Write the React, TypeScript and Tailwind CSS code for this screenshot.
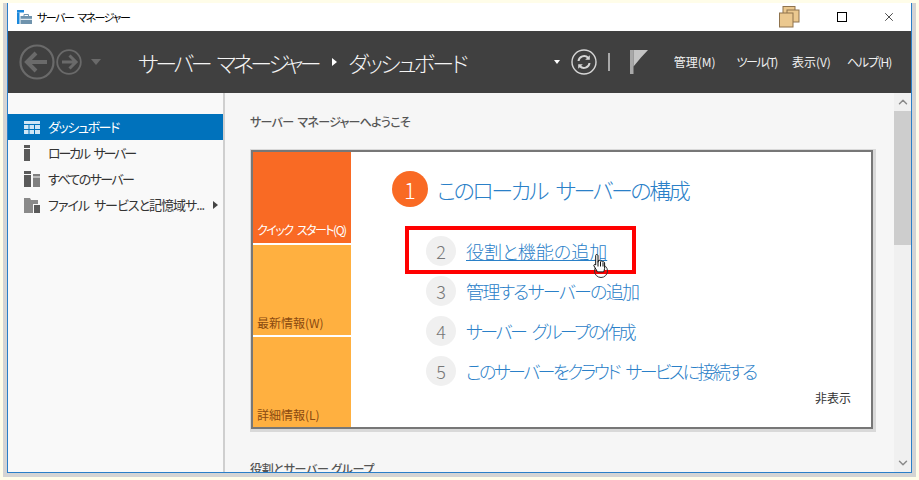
import { ChevronUp, ChevronDown, X } from "lucide-react";

const font = "font-['Noto_Sans_CJK_JP','Noto_Sans',sans-serif] [font-feature-settings:'palt']";

const BackButton = ({ size }: { size: number }) => (
  <svg width={size} height={size} viewBox="0 0 36 36" fill="none" stroke="#6a6a6a">
    <circle cx="18" cy="18" r="16.5" strokeWidth="2.2" />
    <path d="M8 18h20M17 9l-9 9 9 9" strokeWidth="4" />
  </svg>
);

const ForwardButton = () => (
  <svg width="26" height="26" viewBox="0 0 26 26" fill="none" stroke="#6a6a6a">
    <circle cx="13" cy="13" r="11.8" strokeWidth="1.8" />
    <path d="M6 13h14M13.5 6.5 20 13l-6.5 6.5" strokeWidth="3" />
  </svg>
);

const RefreshButton = () => (
  <svg width="26" height="26" viewBox="0 0 26 26" fill="none" stroke="#d6d6d6">
    <circle cx="13" cy="13" r="12" strokeWidth="1.4" />
    <path d="M7.5 12a5.6 5.6 0 0 1 9.6-3.2M18.5 14a5.6 5.6 0 0 1-9.6 3.2" strokeWidth="2" />
    <path d="M18.8 6.2v4.6h-4.6zM7.2 19.8v-4.6h4.6z" fill="#d6d6d6" stroke="none" />
  </svg>
);

const Flag = () => (
  <svg width="18" height="24" viewBox="0 0 18 24">
    <rect x="0" y="0" width="3.5" height="24" fill="#a8a8a8" />
    <path d="M3.5 0H18l-7 7.5-7.5 9z" fill="#c4c4c4" />
  </svg>
);

const AppLogo = () => (
  <svg width="15" height="14" viewBox="0 0 15 14">
    <rect x="0" y="0" width="7" height="2.5" fill="#1a88dc" />
    <rect x="0" y="2.5" width="2.5" height="11.5" fill="#1a88dc" />
    <rect x="3.5" y="6" width="11.5" height="8" fill="#6f93ad" />
    <path d="M7 6V4.5h4.5V6" fill="none" stroke="#6f93ad" />
    <rect x="3.5" y="8.8" width="11.5" height="1" fill="#fff" />
  </svg>
);

const Windows = () => (
  <svg width="21" height="22" viewBox="0 0 21 22" stroke="#8f734d" fill="#ebc88f">
    <rect x="4" y="0.5" width="12" height="12" />
    <rect x="8" y="4" width="12" height="12" />
    <rect x="0.5" y="7" width="13.5" height="14" />
  </svg>
);

const Hand = () => (
  <svg width="18" height="26" viewBox="0 0 18 26">
    <circle cx="9" cy="18" r="6.5" fill="none" stroke="#333" strokeWidth="1" />
    <path
      d="M4.5 1.5c1 0 1.5.6 1.5 1.5v6.5l.5-2c1-.4 1.8 0 2 .8.8-.6 1.8-.3 2.1.6.9-.5 2 0 2 1v5.5c0 1.500-.8 2.600-1 3.500H5.500L2 13c-.6-1 .5-2 1.500-1.200l.2.200V3c0-.9.200-1.500.8-1.500z"
      fill="#fff"
      stroke="#111"
      strokeWidth="1"
    />
    <path d="M6 9.500v4M8.500 9v4.500M11 9.500v4" stroke="#111" strokeWidth="1" />
  </svg>
);

const TableIcon = () => (
  <svg width="16" height="13" viewBox="0 0 16 13">
    <rect width="16" height="3" fill="#cfe6f6" />
    <path d="M0 4h4.500v4H0zM5.500 4h4.500v4H5.500zM11 4h5v4h-5zM0 9h4.500v4H0zM5.500 9h4.500v4H5.500zM11 9h5v4h-5z" fill="#cfe6f6" />
  </svg>
);

const ServerIcon = () => (
  <svg width="6" height="16" viewBox="0 0 6 16">
    <rect width="6" height="3" fill="#5a5a5a" />
    <rect y="4" width="6" height="12" fill="#5a5a5a" />
  </svg>
);

const ServersIcon = () => (
  <svg width="16" height="16" viewBox="0 0 16 16">
    <rect width="7" height="3" fill="#5a5a5a" />
    <rect y="4" width="7" height="12" fill="#5a5a5a" />
    <rect x="9" y="3" width="7" height="2.500" fill="#808080" />
    <rect x="9" y="6.500" width="7" height="9.500" fill="#808080" />
  </svg>
);

const FilesIcon = () => (
  <svg width="16" height="15" viewBox="0 0 16 15">
    <path d="M0 0h6l1 2h7v4H9v9H0z" fill="#8a8a8a" />
    <rect x="10" y="7" width="6" height="8" fill="#5a5a5a" />
  </svg>
);

const sideItems = [
  { label: "ローカル サーバー", icon: <ServerIcon />, cls: "tracking-[-2.2px] [word-spacing:4px]" },
  { label: "すべてのサーバー", icon: <ServersIcon />, cls: "tracking-[-1.6px]" },
];

const steps = [
  { n: 2, label: "役割と機能の追加", link: true, cls: "" },
  { n: 3, label: "管理するサーバーの追加", cls: "tracking-[-1.7px]" },
  { n: 4, label: "サーバー グループの作成", cls: "tracking-[-2.5px] [word-spacing:5px]" },
  { n: 5, label: "このサーバーをクラウド サービスに接続する", cls: "tracking-[-2.55px] [word-spacing:5px]" },
];

const App = () => {
  return (
    <div className={`w-[919px] h-[480px] overflow-hidden bg-[#fffde9] pt-[3px] pl-[3px] pr-[3px] pb-[3px] ${font}`}>
      <div className="w-[913px] h-[474px] bg-[#d4d4d4] pl-[4px] pr-[4px] pb-[4px]">
        <div className="h-full flex flex-col border-x border-b border-[#2b7fc8] bg-white overflow-hidden">
          {/* title bar */}
          <div className="relative h-[28px] shrink-0 flex items-center bg-white">
            <div className="ml-[9px] mr-[5px] flex">
              <AppLogo />
            </div>
            <span className="text-[11px] tracking-[-1.5px] [word-spacing:3px] text-black">サーバー マネージャー</span>
            <div className="ml-auto flex items-center">
              <div className="mr-[37px]">
                <Windows />
              </div>
              <div className="w-[10px] h-[10px] border border-black mr-[35px]" />
              <X size={14} strokeWidth={1.2} className="mr-[15px] text-black" />
            </div>
          </div>

          {/* dark header */}
          <div className="h-[62px] shrink-0 bg-[#404040] flex items-center">
            <div className="ml-[11px] flex items-center gap-[1px]">
              <BackButton size={36} />
              <ForwardButton />
              <div className="ml-[8px] w-0 h-0 border-x-[5px] border-x-transparent border-t-[6px] border-t-[#6a6a6a]" />
            </div>
            <div className="ml-[37px] flex items-center text-[22px] font-light tracking-[-2.7px] text-[#f4f4f4]">
              <span className="tracking-[-3.4px] [word-spacing:6px]">サーバー マネージャー</span>
              <div className="ml-[14px] mr-[11px] w-0 h-0 border-y-[4px] border-y-transparent border-l-[5px] border-l-white" />
              <span>ダッシュボード</span>
            </div>
            <div className="ml-auto flex items-center">
              <div className="w-0 h-0 border-x-[3.500px] border-x-transparent border-t-[4px] border-t-white mr-[11px]" />
              <RefreshButton />
              <div className="ml-[11px] w-[2px] h-[18px] bg-[#a8a8a8]" />
              <div className="ml-[20px]">
                <Flag />
              </div>
              <div className="ml-[26px] mr-[20px] flex items-center text-[12px] text-[#f0f0f0]">
                <span>管理(M)</span>
                <span className="ml-[21px] tracking-[-1.5px]">ツール(T)</span>
                <span className="ml-[15px]">表示(V)</span>
                <span className="ml-[16px] tracking-[-1.200px]">ヘルプ(H)</span>
              </div>
            </div>
          </div>

          <div className="flex-1 min-h-0 flex">
            {/* sidebar */}
            <div className="w-[217px] shrink-0 bg-[#f9f9f9] border-r-2 border-[#cfcfcf] pt-[21px]">
              <div className="h-[26px] bg-[#0072bc] flex items-center text-white text-[13px]">
                <div className="w-[40px] pl-[16px] flex">
                  <TableIcon />
                </div>
                <span className="tracking-[-1.4px]">ダッシュボード</span>
              </div>
              {sideItems.map((item) => (
                <div key={item.label} className="h-[26px] flex items-center text-[13px] text-[#333]">
                  <div className="w-[40px] pl-[16px] flex">{item.icon}</div>
                  <span className={item.cls}>{item.label}</span>
                </div>
              ))}
              <div className="h-[26px] flex items-center text-[13px] text-[#333]">
                <div className="w-[40px] pl-[16px] flex shrink-0">
                  <FilesIcon />
                </div>
                <span className="whitespace-nowrap tracking-[-1px] [word-spacing:3px]">ファイル サービスと記憶域サ...</span>
                <div className="ml-auto mr-[5px] w-0 h-0 border-y-[4.500px] border-y-transparent border-l-[5px] border-l-[#444]" />
              </div>
            </div>

            {/* main content */}
            <div className="relative flex-1 min-w-0 bg-[#f6f6f6] overflow-hidden pl-[26px] pr-[21px] pt-[20px]">
              <div className="-ml-[1px] text-[12px] font-medium tracking-[-0.7px] [word-spacing:2px] text-[#555] leading-[18px]">サーバー マネージャーへようこそ</div>
              <div className="mt-[19px] h-[279px] bg-white border-2 border-[#777] shadow-[1px_1px_0_2px_#d9d9d9] flex">
                <div className="w-[98px] shrink-0 flex flex-col gap-[2px]">
                  <div className="flex-1 bg-[#f96a24] flex items-end px-[4px] pb-[4px] text-[12px] tracking-[-1.5px] [word-spacing:3px] whitespace-nowrap text-white">クイック スタート(Q)</div>
                  <div className="flex-1 bg-[#ffb040] flex items-end px-[4px] pb-[3px] text-[12px] text-[#8a4a10]">最新情報(W)</div>
                  <div className="flex-1 bg-[#ffb040] flex items-end px-[4px] pb-[3px] text-[12px] text-[#8a4a10]">詳細情報(L)</div>
                </div>
                <div className="relative flex-1 pl-[41px] pt-[19px]">
                  <div className="flex items-center">
                    <div className="w-[36px] h-[36px] rounded-full bg-[#f96a24] flex items-center justify-center text-[22px] font-light text-white">1</div>
                    <span className="ml-[9px] text-[22px] font-light tracking-[-2.4px] [word-spacing:6px] text-[#2a80c8]">このローカル サーバーの構成</span>
                  </div>
                  <div className="mt-[29px] ml-[34px] flex flex-col gap-[10px]">
                    {steps.map((s) => (
                      <div key={s.n} className="flex items-center h-[30px]">
                        <div className="w-[30px] h-[30px] rounded-full bg-[#f0f0f0] flex items-center justify-center text-[18px] font-light text-[#777]">{s.n}</div>
                        <span className={`ml-[10px] text-[18px] font-light text-[#2a80c8] ${s.cls} ${s.link ? "underline" : ""}`}>{s.label}</span>
                      </div>
                    ))}
                  </div>
                  <div className="absolute right-[20px] bottom-[20px] text-[12px] text-[#333]">非表示</div>
                </div>
              </div>
              <div className="-ml-[1px] mt-[31px] text-[12px] font-medium tracking-[-0.3px] text-[#555] leading-[18px]">役割とサーバー グループ</div>
              <div className="absolute left-[180px] top-[133px] w-[231px] h-[48px] border-4 border-[#ff0000]" />
              <div className="absolute left-[367px] top-[160px]">
                <Hand />
              </div>
            </div>

            {/* scrollbar */}
            <div className="w-[17px] shrink-0 bg-[#f0f0f0] flex flex-col">
              <div className="h-[18px] flex items-center justify-center">
                <ChevronUp size={14} strokeWidth={2.5} className="text-[#8a8a8a]" />
              </div>
              <div className="h-[134px] bg-[#cdcdcd]" />
              <div className="mt-auto h-[18px] flex items-center justify-center">
                <ChevronDown size={14} strokeWidth={2.5} className="text-[#8a8a8a]" />
              </div>
            </div>
          </div>
        </div>
      </div>
    </div>
  );
};

export default App;
